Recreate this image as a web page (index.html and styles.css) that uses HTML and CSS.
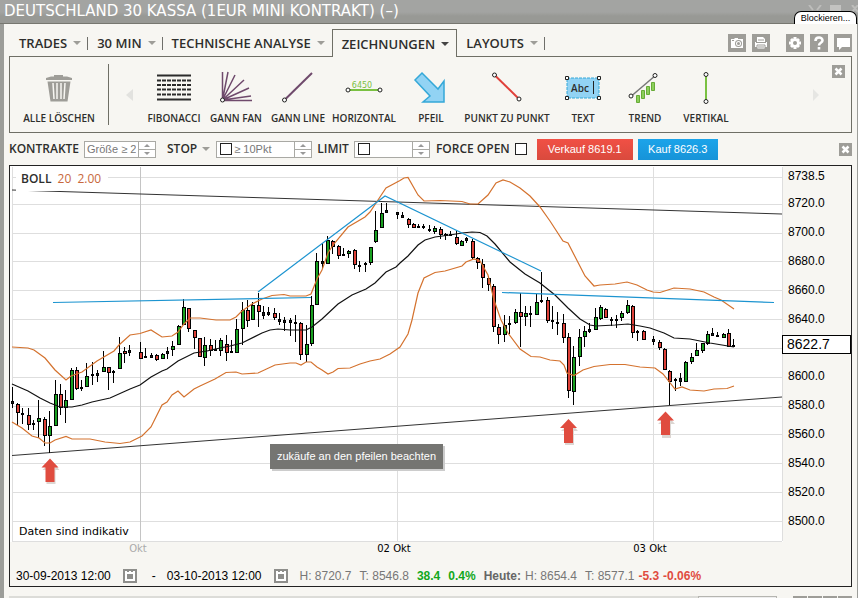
FILE: index.html
```html
<!DOCTYPE html>
<html lang="de">
<head>
<meta charset="utf-8">
<meta name="viewport" content="width=device-width, initial-scale=1">
<title>Deutschland 30 Kassa</title>
<link rel="stylesheet" href="styles.css">
</head>
<body>
<header class="titlebar">
  <h1>DEUTSCHLAND 30 KASSA (1EUR MINI KONTRAKT) (–)</h1>
  <svg class="winicons" width="50" height="8" viewBox="0 0 50 8" aria-hidden="true">
    <path d="M1 0l4 5M13 0l-4 5M4 7h6M44 0l6 7M50 0l-6 7" stroke="#bdbdbb" stroke-width="2" fill="none"/>
    <rect x="22" y="0" width="11" height="6" fill="#c3c3c1"/>
  </svg>
  <button class="block">Blockieren...</button>
</header>

<main class="window">
  <nav class="tabs">
    <button class="tab">TRADES <i class="caret"></i></button>
    <button class="tab">30 MIN <i class="caret"></i></button>
    <button class="tab last">TECHNISCHE ANALYSE <i class="caret"></i></button>
    <button class="tab active">ZEICHNUNGEN <i class="caret"></i></button>
    <button class="tab">LAYOUTS <i class="caret"></i></button>
    <div class="utils">
      <button aria-label="Bildschirmfoto"><svg width="18" height="18" viewBox="0 0 18 18"><path d="M3 5h3l1-1h3v1h5v9H3z" fill="#fff"/><circle cx="10.500" cy="9.500" r="3.500" fill="#9e9d98"/><circle cx="10.500" cy="9.500" r="2.500" fill="#fff"/><circle cx="10.500" cy="9.500" r="1.500" fill="#9e9d98"/><path d="M4 6h2v1H4z" fill="#9e9d98"/></svg></button>
      <button aria-label="Drucken"><svg width="18" height="18" viewBox="0 0 18 18"><path d="M5 3h6l2 2v3H5z" fill="#fff"/><path d="M3 8h1v1h10V8h1v5H3z" fill="#fff"/><path d="M5 11h8v4H5z" fill="#fff" stroke="#9e9d98"/><path d="M6 6h6M6 13h6" stroke="#9e9d98"/></svg></button>
      <button class="apart" aria-label="Einstellungen"><svg width="18" height="18" viewBox="0 0 18 18"><g stroke="#fff" stroke-width="3"><path d="M9 3v12M3 9h12M5 5l8 8M13 5l-8 8"/></g><circle cx="9" cy="9" r="4.500" fill="#fff"/><circle cx="9" cy="9" r="2" fill="#9e9d98"/></svg></button>
      <button aria-label="Hilfe"><svg width="18" height="18" viewBox="0 0 18 18"><path d="M5.500 7C5.500 2.500 12.500 2.500 12.500 6.500C12.500 9 9 8.500 9 11.500M9 13v2.500" fill="none" stroke="#fff" stroke-width="2.600"/></svg></button>
      <button aria-label="Nachricht"><svg width="18" height="18" viewBox="0 0 18 18"><path d="M3 4h13v9H8l-3 3v-3H3z" fill="#fff"/></svg></button>
    </div>
  </nav>

  <section class="tools">
    <button class="tool clear">
      <svg width="36" height="36" viewBox="0 0 36 36"><path d="M5 9V7l5-1.500h3V4h9v1.500h4L31 7v2zM6.500 10.500h23l-3 20h-17z" fill="#9e9d98"/><path d="M12 12l1 16M16 12v16M20 12v16M24 12l-1 16" stroke="#f7f6f2" stroke-width="1.500"/></svg>
      <span>ALLE LÖSCHEN</span>
    </button>
    <button class="page" aria-label="Zurück"><svg width="8" height="12" viewBox="0 0 8 12"><path d="M8 0v12L1 6z" fill="#e2e2df"/></svg></button>
    <div class="toollist">
      <button class="tool w62"><svg width="36" height="36" viewBox="0 0 36 36"><path d="M1 4.500h34M1 28.500h34" stroke="#2b2b2b" stroke-width="2"/><path d="M1 9.500h34M1 14h34M1 18.500h34M1 23.500h34" stroke="#2b2b2b" stroke-width="2" stroke-dasharray="4 1"/></svg><span>FIBONACCI</span></button>
      <button class="tool w62"><svg width="36" height="36" viewBox="0 0 36 36"><path d="M4.500 29V1M4.500 29L10 1M4.500 29L17 4M4.500 29L26 9M4.500 29L31 17M4.500 29L33 25M4.500 29.500L34 29.500" stroke="#6f4a6c" stroke-width="1.500"/><circle cx="4.500" cy="29" r="2" fill="#fff" stroke="#222"/></svg><span>GANN FAN</span></button>
      <button class="tool w62"><svg width="36" height="36" viewBox="0 0 36 36"><path d="M4.500 29L32 2" stroke="#6f4a6c" stroke-width="2"/><circle cx="4.500" cy="29" r="2" fill="#fff" stroke="#222"/></svg><span>GANN LINE</span></button>
      <button class="tool w70"><svg width="38" height="36" viewBox="0 0 38 36"><text x="17" y="17" class="tiny">6450</text><path d="M3 19h32" stroke="#7ac142" stroke-width="2"/><circle cx="3" cy="19" r="2" fill="#fff" stroke="#222"/><circle cx="35" cy="19" r="2" fill="#fff" stroke="#222"/></svg><span>HORIZONTAL</span></button>
      <button class="tool w64"><svg width="36" height="36" viewBox="0 0 36 36"><path d="M9 2L25 18L31 10V31H10L17 25L2 9z" fill="#92d3f4" stroke="#35a8d8" stroke-width="1.500"/></svg><span>PFEIL</span></button>
      <button class="tool w88"><svg width="36" height="36" viewBox="0 0 36 36"><path d="M5.500 4L30 28" stroke="#e0403a" stroke-width="2"/><circle cx="5.500" cy="4" r="2" fill="#fff" stroke="#222"/><circle cx="30" cy="28" r="2" fill="#fff" stroke="#222"/></svg><span>PUNKT ZU PUNKT</span></button>
      <button class="tool w64"><svg width="36" height="36" viewBox="0 0 36 36"><rect x="2" y="7" width="32" height="20" fill="#92d3f4" stroke="#35a8d8" stroke-dasharray="3 1"/><text x="15" y="21" class="abc">Abc</text><path d="M28.500 10v13" stroke="#222"/><path d="M.5 5.500h3v3h-3zM32.500 5.500h3v3h-3zM.5 25.500h3v3h-3zM32.500 25.500h3v3h-3z" fill="#fff" stroke="#222"/></svg><span>TEXT</span></button>
      <button class="tool w60"><svg width="36" height="36" viewBox="0 0 36 36"><path d="M5 24.500L29 4" stroke="#777" stroke-width="1.500"/><path d="M9.500 24.500h3v7h-3zM14.500 19.500h3v8h-3zM19.500 15.500h3v8h-3zM24.500 11.500h3v8h-3z" fill="#8ccf5b" stroke="#67ab37"/><circle cx="4" cy="25" r="2" fill="#fff" stroke="#222"/><circle cx="28" cy="4.500" r="2" fill="#fff" stroke="#222"/></svg><span>TREND</span></button>
      <button class="tool w62"><svg width="36" height="36" viewBox="0 0 36 36"><path d="M18 3v28" stroke="#7ac142" stroke-width="2"/><circle cx="18" cy="3.500" r="2" fill="#fff" stroke="#222"/><circle cx="18" cy="30.500" r="2" fill="#fff" stroke="#222"/></svg><span>VERTIKAL</span></button>
    </div>
    <button class="page next" aria-label="Weiter"><svg width="8" height="12" viewBox="0 0 8 12"><path d="M1 0v12L7 6z" fill="#e6e6e3"/></svg></button>
    <button class="close top" aria-label="Schließen"><svg width="13" height="13" viewBox="0 0 13 13"><path d="M3.500 3.500l6 6M9.500 3.500l-6 6" stroke="#fff" stroke-width="2.500"/></svg></button>
  </section>

  <form class="order">
    <label for="size">KONTRAKTE</label>
    <span class="field f72"><input id="size" type="text" placeholder="Größe ≥ 2"><i class="spin"></i></span>
    <label class="stop" for="stop">STOP <i class="caret"></i></label>
    <span class="field f96"><input type="checkbox" aria-label="Stop aktiv"><input id="stop" type="text" placeholder="≥ 10Pkt"><i class="spin"></i></span>
    <label class="limit" for="limit">LIMIT</label>
    <span class="field f76"><input type="checkbox" aria-label="Limit aktiv"><input id="limit" type="text"><i class="spin"></i></span>
    <label class="force" for="force">FORCE OPEN</label>
    <input id="force" type="checkbox">
    <button type="button" class="deal sell">Verkauf 8619.1</button>
    <button type="button" class="deal buy">Kauf 8626.3</button>
    <button type="button" class="close" aria-label="Schließen"><svg width="13" height="13" viewBox="0 0 13 13"><path d="M3.500 3.500l6 6M9.500 3.500l-6 6" stroke="#fff" stroke-width="2.500"/></svg></button>
  </form>

  <section class="chart">
    <div class="plotrow">
      <div class="plot">
        <svg viewBox="10 166 773 376" preserveAspectRatio="none">
          <path class="grid" d="M12 177.500H782M12 204.500H782M12 233.500H782M12 261.500H782M12 290.500H782M12 319.500H782M12 348.500H782M12 377.500H782M12 406.500H782M12 434.500H782M12 463.500H782M12 492.500H782M12 521.500H782M12 541.500H782M12.500 167V541M397.500 167V541M653.500 167V541M782.500 167V541"/>
          <path class="grid dark" d="M140.500 167V541"/>
          <path class="trend" d="M12 190L782 214M12 455.500L782 397"/>
          <g id="candles"></g>
          <polyline class="band" points="12,347 28,348 34,350 45,358 55,370 66,380 71,376 82,372 97,361 114,351 119,345 130,335 140,333.500 151,330 162,337 172,336 178,332 184,324 190,318 200,318 216,320 230,320 236,317 242,311 252,304 262,299 272,295.500 284,294.500 290,296 306,296 311,294 317,279 322,270 328,253 333,245 348,227 365,217 370,212 378,200 386,188 400,180.500 404,178 408,177.500 418,195 424,201 440,200.500 462,201.500 470,204 478,204 488,195 496,183 503,180 510,182 520,188 530,196 540,207 550,221 563,241 568,243 585,276 594,286 600,285 615,284 627,282 637,285 647,290 653,292 660,292.500 674,288 690,289 704,292 714,297 721,300 734,309"/>
          <polyline class="band" points="12,422 22,428 32,436 39,438 45,443 50,443 55,440 66,436.500 72,439 90,439 105,442 120,443.500 130,442 142,436 151,427 162,405 167,402 172,395 178,391 184,397 194,389 200,386 215,379 226,372.500 236,372 242,374 258,373 275,365 290,363 296,363 301,365 306,362 311,362 317,367 322,370 328,374 333,372 338,368.500 350,368 360,364 370,361 380,359 390,354 400,347 408,334 412,320 418,293 424,278 435,272.500 445,271 462,266 466,262 474,259 480,261 488,275 494,300 501,320 508,333 520,349 531,356.500 540,357 550,360 560,361 564,365 567,373 574,375.500 583,370 594,366.500 610,364.500 625,364.500 640,367 655,368 663,374 675,389 682,387 690,390 704,391 714,389 727,388.500 734,386"/>
          <polyline class="mean" points="12,384 28,391 40,398 50,403 60,407 72,407 82,405 92,402 110,398 130,389 140,385 151,377 162,371 167,369 178,361 194,353 207,351 220,348 230,346 242,343 262,333 270,330 278,329 290,330 306,330 312,327 322,319 338,304 352,295 366,289 375,283 386,272 396,267 400,263 408,256 418,245 425,240 435,237 450,235 462,233 472,232 480,232.500 487,236 495,244 510,262 525,274 540,283 555,295 568,308 580,319 590,325 596,326 615,325 628,324 640,326 650,328 664,333 674,338 690,339 710,343 734,347"/>
          <path class="blue" d="M53 302.500L311 297.500M258 292L385 196L541 271M502 292.500L774 302.500"/>
          <g class="shadow"><path d="M51.500 461l8 9h-4v14h-9v-14h-4z"/><path d="M570 422l8 9h-4v14h-9v-14h-4z"/><path d="M667 415l8 9h-4v14h-9v-14h-4z"/></g>
          <g class="arrow"><path d="M50 458.500l8.500 9h-4v14.500h-9v-14.500h-4z"/><path d="M568.500 419l8.500 9h-4v15h-9v-15h-4z"/><path d="M665.500 411.500l8.500 9h-4v14.500h-9v-14.500h-4z"/></g>
        </svg>
        <div class="legend">BOLL <span>20</span> <span>2.00</span></div>
        <div class="note">zukäufe an den pfeilen beachten</div>
        <div class="hint">Daten sind indikativ</div>
      </div>
      <div class="axis">
        <div class="max">8738.5</div>
        <ul>
          <li>8720.0</li><li>8700.0</li><li>8680.0</li><li>8660.0</li><li>8640.0</li>
          <li class="current"><b>8622.7</b></li>
          <li>8600.0</li><li>8580.0</li><li>8560.0</li><li>8540.0</li><li>8520.0</li><li>8500.0</li>
        </ul>
      </div>
    </div>
    <div class="dates"><span class="faint">Okt</span><span>02 Okt</span><span>03 Okt</span></div>
    <div class="stats">
      <span class="date">30-09-2013 12:00</span>
      <button class="cal" aria-label="Startdatum"><svg width="14" height="14" viewBox="0 0 14 14"><rect x="1" y="1" width="12" height="12" fill="#fff" stroke="#8e8e8b" stroke-width="2"/><path d="M4 5h6v5H4zM4 1v2h2V1zM8 1v2h2V1z" fill="#8e8e8b"/></svg></button>
      <span class="dash">-</span>
      <span class="date">03-10-2013 12:00</span>
      <button class="cal" aria-label="Enddatum"><svg width="14" height="14" viewBox="0 0 14 14"><rect x="1" y="1" width="12" height="12" fill="#fff" stroke="#8e8e8b" stroke-width="2"/><path d="M4 5h6v5H4zM4 1v2h2V1zM8 1v2h2V1z" fill="#8e8e8b"/></svg></button>
      <div class="figures">
        <span>H: 8720.7</span><span>T: 8546.8</span><b class="up">38.4</b><b class="up">0.4%</b>
        <b class="today">Heute:</b><span class="tight">H: 8654.4</span><span>T: 8577.1</span><b class="down tight">-5.3</b><b class="down tight">-0.06%</b>
      </div>
    </div>
  </section>

  <footer class="strip"><i class="bar"></i><i class="box"></i><span><i></i><i></i><i></i><i></i></span></footer>
</main>
<script src="candles.js"></script>
</body>
</html>
```
FILE: styles.css
```css
* { box-sizing: border-box; }
body {
  margin: 0;
  background: #9c9d99;
  font: 12px/16px "Liberation Sans", Arial, sans-serif;
  color: #000;
}
button { margin: 0; padding: 0; border: 0; background: none; color: inherit; font: inherit; }
svg { display: block; }

.titlebar {
  position: relative;
  height: 24px;
  padding-left: 4px;
  background: linear-gradient(#a3a4a2, #a3a4a2 12px, #989995 16px, #989995);
  border-bottom: 1px solid #777770;
}
.titlebar h1 { margin: 0; font: 400 15px/23px "DejaVu Sans", sans-serif; color: #fff; white-space: nowrap; }
.winicons { position: absolute; top: 5px; right: 0; }
.block {
  position: absolute;
  right: 1px;
  bottom: -1px;
  width: 63px;
  height: 13px;
  border: 1px solid #000;
  border-bottom: 0;
  border-radius: 7px 7px 0 0;
  background: #fff;
  font-size: 9px;
  line-height: 12px;
}

.window { margin: 0 1px 0 4px; padding: 0 5px; background: #f7f6f2; }

.tabs { display: flex; align-items: flex-end; height: 32px; padding-left: 1px; }
.tab {
  display: flex;
  align-items: center;
  gap: 6px;
  height: 28px;
  padding: 2px 0 0 9px;
  font: 600 13px/16px "Open Sans", sans-serif;
  color: #2e2e2c;
  white-space: nowrap;
}
.tab::after { content: ""; width: 1px; height: 13px; background: #6f6f6a; }
.tab.last::after, .tab.active::after { display: none; }
.tab.last { padding-right: 7px; }
.tab.active {
  position: relative;
  margin-bottom: -1px;
  padding: 1px 7px 0 9px;
  border: 1px solid #6f6f66;
  border-bottom: 0;
  background: #f7f6f2;
}
.caret { display: inline-block; border: 4px solid transparent; border-top-color: #9e9d98; border-bottom: 0; }
.active .caret { border-top-color: #444; }
.utils { display: flex; gap: 6px; margin: 0 0 4px auto; }
.utils button { width: 18px; height: 18px; background: #9e9d98; }
.utils .apart { margin-left: 10px; }

.tools { display: flex; align-items: flex-start; height: 77px; border: 1px solid #6f6f66; }
.tool {
  display: flex;
  flex-direction: column;
  align-items: center;
  gap: 5px;
  padding-top: 7px;
  font: 600 10px/12px "Open Sans", sans-serif;
  color: #2e2e2c;
  white-space: nowrap;
}
.tool svg { overflow: visible; }
.clear { width: 99px; height: 61px; margin-top: 7px; padding-top: 7px; border-right: 1px solid #6f6f66; }
.toollist { display: flex; flex: 1; padding: 7px 0 0 10px; }
.w60 { width: 60px; }
.w62 { width: 62px; }
.w64 { width: 64px; }
.w70 { width: 70px; }
.w88 { width: 88px; }
.tiny { font: 8px "DejaVu Sans", sans-serif; fill: #7ac142; text-anchor: middle; }
.abc { font: 600 10px "Open Sans", sans-serif; fill: #2e2e2c; text-anchor: middle; }
.page { margin: 32px 0 0 16px; }
.page.next { margin: 32px 12px 0 0; }
.close { width: 13px; height: 13px; background: #9e9d98; }
.close.top { margin: 8px 6px 0 0; }

.order { display: flex; align-items: center; height: 32px; font-size: 11px; }
.order label { font: 600 12px/16px "Open Sans", sans-serif; color: #2e2e2c; white-space: nowrap; }
.field { display: flex; align-items: center; height: 17px; border: 1px solid #a9a9a4; background: #fff; }
.f72 { width: 72px; margin-left: 5px; }
.f96 { width: 96px; margin-left: 6px; }
.f76 { width: 76px; margin-left: 5px; }
.field input[type="text"] { flex: 1; min-width: 0; height: 15px; padding: 0 2px; border: 0; background: none; font: 11px/15px "Liberation Sans", Arial, sans-serif; }
.field input::placeholder { color: #777; opacity: 1; }
.order input[type="checkbox"] { appearance: none; flex: none; width: 12px; height: 12px; margin: 0; border: 1px solid #222; background: #fff; }
.field input[type="checkbox"] { margin-left: 3px; }
.spin { flex: none; display: flex; flex-direction: column; align-items: center; justify-content: center; gap: 5px; width: 17px; height: 15px; border-left: 1px solid #a9a9a4; background: linear-gradient(#a9a9a4, #a9a9a4) 0 7px / 100% 1px no-repeat; }
.spin::before, .spin::after { content: ""; border: 3px solid transparent; }
.spin::before { border-top: 0; border-bottom-color: #999; }
.spin::after { border-bottom: 0; border-top-color: #999; }
.stop { display: flex; align-items: center; gap: 5px; margin-left: 11px; }
.limit { margin-left: 5px; }
.force { margin: 0 5px 0 6px; }
.deal { height: 21px; color: #fff; font-size: 11px; }
.sell { width: 96px; margin-left: 10px; background: linear-gradient(#f15045, #d94a3d); }
.buy { width: 80px; margin-left: 5px; background: linear-gradient(#1ba4ea, #1793d8); }
.order .close { margin-left: auto; }

.chart { border: 1px solid #222; }
.plotrow { display: flex; height: 376px; }
.plot { position: relative; flex: 1; background: #fff; }
.plot > svg { width: 100%; height: 100%; }
.plot > svg * { vector-effect: non-scaling-stroke; }
.grid { fill: none; stroke: #dedede; shape-rendering: crispEdges; }
.grid.dark { stroke: #c4c4c4; }
.trend { stroke: #333; }
.band { fill: none; stroke: #d4722e; stroke-width: 1.200; }
.mean { fill: none; stroke: #111; stroke-width: 1.200; }
.blue { fill: none; stroke: #1c94d0; stroke-width: 1.200; }
.arrow { fill: #e04c3f; }
.shadow { fill: #dcd6d2; }
.wick { stroke: #000; shape-rendering: crispEdges; }
.candle { stroke: #000; shape-rendering: crispEdges; }
.rise { fill: #18a020; }
.fall { fill: #dd4038; }
.flat { fill: #222; }
.legend { position: absolute; top: 3px; left: 6px; padding: 2px 7px 4px 5px; background: #fff; font: 600 12px/16px "Open Sans", sans-serif; color: #2e2e2c; }
.legend span { margin-left: 3px; font-weight: 400; color: #c8683c; }
.note { position: absolute; top: 278px; left: 260px; padding: 4px 7px 5px 7px; background: #757572; box-shadow: 2px 2px 0 #ccc; color: #fff; font-size: 11px; white-space: nowrap; }
.hint { position: absolute; bottom: 2px; left: 9px; font: 11px/16px "DejaVu Sans", sans-serif; }

.axis { display: flex; flex-direction: column; width: 68px; padding: 2px 0 13px 5px; }
.max { height: 16px; margin-bottom: 11px; }
.axis ul { display: flex; flex: 1; flex-direction: column; justify-content: space-between; margin: 0; padding: 0; list-style: none; }
.axis li { height: 16px; }
.current { position: relative; }
.current b { position: absolute; top: -5px; left: -6px; width: 69px; height: 19px; padding-left: 4px; border: 1px solid #000; background: #fff; font: 14px/17px "Liberation Sans", Arial, sans-serif; }

.dates { display: grid; grid-template-columns: repeat(3, 1fr); margin-right: 73px; font: 10px/14px "DejaVu Sans", sans-serif; text-align: center; }
.faint { color: #aaa; }
.stats { display: flex; align-items: center; height: 30px; padding: 9px 0 0 6px; white-space: nowrap; }
.cal { margin: 0 0 0 12px; }
.dash { margin: 0 11px 0 15px; }
.figures { display: flex; gap: 8px; margin-left: 12px; color: #777; }
.figures .tight { margin-left: -4px; }
.up { color: #12a81c; }
.today { color: #666; }
.down { color: #e04c3f; }

.strip { display: flex; height: 12px; padding-top: 9px; }
.strip i { display: block; height: 2px; background: #9e9d98; }
.strip .bar { flex: 1; background: #dcdcd8; }
.strip .box { width: 79px; border: 1px solid #b5b5b0; border-bottom: 0; background: #eee; }
.strip span { display: grid; grid-template-columns: repeat(4, 14px); gap: 1px; margin-left: 16px; }
```
FILE: candles.js
```js
// x, high, low, body top, body bottom, kind (1 rise, 0 flat, -1 fall)
const candles = [
  [12,387,408,401,403,0],[17,403,425,404,412,-1],[22,408,424,413,414,0],[28,408,430,415,424,-1],[33,420,430,423,424,0],
  [38,400,438,418,421,1],[44,417,446,419,435,-1],[49,411,453,426,435,1],[55,380,426,394,425,1],[60,384,415,394,407,-1],
  [65,390,423,400,407,1],[71,368,400,370,399,1],[76,367,390,370,388,-1],[81,380,391,387,388,0],[86,363,387,376,386,1],
  [92,362,385,374,375,0],[97,370,382,373,375,0],[103,351,372,367,371,1],[108,367,390,367,372,-1],[113,370,383,371,372,0],
  [119,337,368,353,368,1],[124,347,363,351,353,-1],[129,345,356,350,352,0],[140,342,358,352,358,-1],[145,348,357,356,357,0],
  [151,353,358,355,357,0],[156,354,361,355,359,-1],[162,353,359,354,358,1],[167,347,359,351,353,0],[172,341,356,346,349,1],
  [178,325,345,326,344,1],[183,299,325,307,324,1],[188,308,332,308,328,-1],[194,330,349,330,337,-1],[199,338,357,338,356,-1],
  [204,337,366,345,357,1],[210,339,356,345,350,-1],[215,340,350,349,350,0],[220,338,356,340,350,1],[226,335,361,344,352,-1],
  [231,340,352,351,352,0],[236,319,353,329,352,1],[242,302,345,310,328,1],[247,300,327,310,320,-1],[252,302,319,305,319,1],
  [258,293,327,305,311,-1],[263,306,319,312,315,0],[268,307,316,312,314,0],[274,308,320,313,317,-1],[279,313,325,319,321,0],
  [284,317,331,320,322,0],[290,318,336,320,322,0],[295,315,342,322,323,0],[300,322,360,323,354,-1],[306,325,362,344,354,1],
  [311,296,346,305,343,1],[316,253,304,261,304,1],[322,243,268,261,263,0],[327,236,263,240,263,1],[332,240,254,241,246,-1],
  [338,245,259,246,255,-1],[343,248,256,254,255,0],[348,250,258,251,253,1],[354,249,269,250,264,-1],[359,261,272,265,266,0],
  [365,262,272,263,264,0],[370,247,265,247,262,1],[375,211,243,230,241,1],[381,203,228,213,227,1],[386,203,212,210,212,0],
  [397,212,219,212,214,0],[402,212,217,215,217,0],[408,218,228,219,224,-1],[413,223,228,224,227,-1],[418,224,228,226,227,0],
  [423,224,229,226,227,0],[429,225,232,229,230,0],[434,226,234,228,231,1],[440,227,239,229,234,-1],[445,233,240,234,235,1],
  [450,231,236,234,235,0],[456,231,245,237,243,-1],[461,240,246,241,245,1],[466,237,243,238,240,0],[472,239,259,241,257,-1],
  [477,257,269,258,262,-1],[482,259,288,264,277,-1],[488,276,291,278,284,-1],[493,284,332,286,326,-1],[498,324,344,327,334,-1],
  [504,315,342,325,334,1],[509,316,334,323,324,0],[515,309,324,312,322,1],[520,293,347,312,316,-1],[525,306,326,313,316,1],
  [530,306,327,313,314,0],[536,294,315,302,314,1],[541,272,303,300,301,0],[547,297,323,300,320,-1],[552,306,329,320,321,0],
  [557,312,335,322,323,0],[563,314,343,323,337,-1],[568,333,398,337,390,-1],[573,346,405,357,391,1],[579,329,366,337,356,1],
  [584,326,347,331,336,1],[589,323,333,329,331,0],[595,308,329,317,329,1],[600,305,320,307,318,1],[605,308,318,309,317,-1],
  [611,317,326,319,320,0],[616,315,328,319,320,0],[621,311,321,313,317,1],[627,300,314,305,312,1],[632,305,338,306,332,-1],
  [637,330,341,331,332,0],[643,330,340,331,339,-1],[653,336,345,339,341,0],[659,340,350,342,347,-1],[664,348,370,349,369,-1],
  [669,370,405,371,381,-1],[675,378,391,379,380,0],[680,373,386,378,381,0],[685,361,382,362,381,1],[691,353,364,357,361,1],
  [696,343,356,350,355,1],[702,343,353,343,350,1],[707,331,345,334,343,1],[712,328,335,333,335,0],[717,332,337,335,336,0],
  [723,333,338,334,337,1],[728,329,347,333,346,-1],[733,339,347,345,346,0]
];
const kinds = { "1": "rise", "0": "flat", "-1": "fall" };
document.getElementById("candles").innerHTML = candles.map(([x, hi, lo, top, bottom, kind]) => {
  const half = kind === 0 ? 1 : 1.5;
  return `<path class="wick" d="M${x + 0.5} ${hi}V${lo}"/>` +
    `<rect class="candle ${kinds[kind]}" x="${x + 0.5 - half}" y="${top + 0.5}" width="${half * 2}" height="${bottom - top}"/>`;
}).join("");
```
